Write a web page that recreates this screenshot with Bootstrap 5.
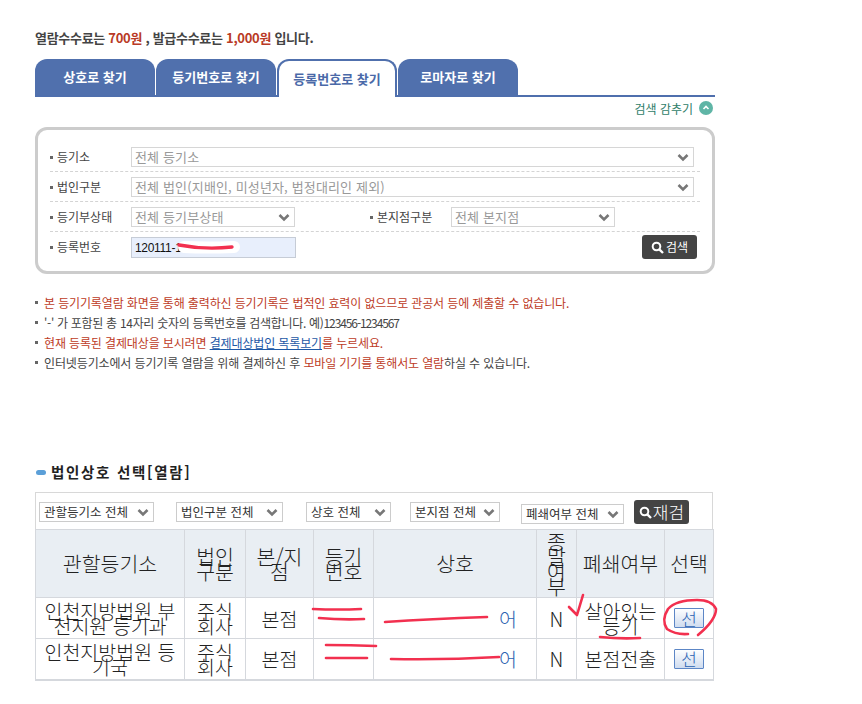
<!DOCTYPE html>
<html lang="ko">
<head>
<meta charset="utf-8">
<title>법인상호 선택</title>
<link rel="stylesheet" href="https://cdn.jsdelivr.net/npm/bootstrap@5.3.0/dist/css/bootstrap.min.css">
<style>
html,body{height:704px;overflow:hidden}
body{font-family:"Noto Sans CJK KR","Liberation Sans",sans-serif;color:#333;background:#fff;position:relative}
.pagewrap{width:680px;margin-left:35px;padding-top:30px}
.feeline{font-size:13px;font-weight:700;line-height:16px;height:29px;color:#444;letter-spacing:-.3px}
.feeline em{font-style:normal;color:#b93a26}
.tabbar{border-bottom:2px solid #4f6fad;height:38px;gap:1px}
.tabbtn{width:120px;height:36px;background:#5070ad;color:#fff;font-size:13px;font-weight:700;border-radius:12px 12px 0 0;display:flex;align-items:center;justify-content:center;text-decoration:none}
.tabbtn.on{background:#fff;color:#4a69a8;border:2px solid #5070ad;border-bottom:0;height:38px;margin-bottom:-2px}
.hidebar{height:30px;font-size:12px;color:#2f7d69;padding:3px 2px 0 0;gap:6px;line-height:18px}
.hidedot{width:14px;height:14px;border-radius:50%;background:#5fb5a6;display:block;margin-top:1px}
.searchbox{border:3px solid #ccc;border-radius:12px;padding:12px 12px 9px 12px;height:147px}
.srow{height:30px;border-bottom:1px dashed #d4d4d4;padding-top:5px}
.srow:last-child{border-bottom:0}
.slabel{width:81px;font-size:12px;color:#444;position:relative;padding-left:7px;flex:none;line-height:18px;margin-top:1px}
.slabel::before{content:"";position:absolute;left:0;top:8px;width:3px;height:3px;background:#666}
.sgap{margin-left:75px}
.pick,.fsel{background-image:url("data:image/svg+xml,%3csvg xmlns='http://www.w3.org/2000/svg' viewBox='0 0 12 9'%3e%3cpath fill='none' stroke='%23777' stroke-width='2.6' d='M1.5 2 6 6.5 10.5 2'/%3e%3c/svg%3e")}
.pick{height:20px;min-height:20px;padding:0 18px 0 3px;font-size:13px;line-height:18px;border:1px solid #d6d6d6;border-radius:0;color:#999;background-position:right 4px center;background-size:12px 9px;letter-spacing:.15px}
.pick.wide{width:563px}
.pick.half{width:164px}
.regno{width:165px;height:21px;min-height:21px;padding:0 3px;font-family:"Liberation Sans",sans-serif;font-size:12px;letter-spacing:-.3px;border:1px solid #c6ccd6;border-radius:0;background:#e8effc;color:#111}
.gobtn{width:55px;height:24px;padding:0;background:#444;color:#fff;font-size:12px;border:0;border-radius:3px;margin:-2px 3px 0 auto;gap:2px}
.notes{list-style:none;margin:19px 0 0;padding:0;font-size:12px;line-height:20px;color:#444;letter-spacing:-.13px;height:164px}
.notes li{padding-left:9px;position:relative}
.notes li::before{content:"";position:absolute;left:0;top:8px;width:3px;height:3px;background:#666}
.notes li.graynote{letter-spacing:-.3px}
.tightnum{letter-spacing:-1.1px}
.redtxt{color:#bd3b26}
.notes a{color:#1d58a6}
.titlebar{font-size:14.5px;font-weight:700;color:#222;line-height:18px;letter-spacing:1.7px;gap:5px;height:35px;padding-top:6px}
.pill{width:10px;height:5px;border-radius:3px;background:#5b9fd8;display:block;margin:7px 0 0 1px}
.filterbar{width:678px;height:37px;border:1px solid #d8d8d8;border-bottom:0}
.fsel{height:20px;min-height:20px;padding:0 16px 0 4px;font-size:12.5px;line-height:18px;border:1px solid #ccc;border-radius:0;color:#333;background-position:right 4px center;background-size:12px 9px;margin-top:9px;flex:none}
.f1{width:115px;margin-left:3px}
.f2{width:107px;margin-left:22px}
.f3{width:85px;margin-left:23px}
.f4{width:90px;margin-left:19px}
.f5{width:103px;margin-left:21px;margin-top:11px}
.fbtn{width:55px;height:24px;margin:7px 0 0 10px;padding:0;background:#444;color:#fff;font-size:17px;font-weight:300;border:0;border-radius:3px;gap:1px;line-height:20px}
.gridtbl{table-layout:fixed;width:678px;margin:0;border-collapse:collapse;--bs-table-bg:transparent}
.gridtbl th,.gridtbl td{border:1px solid #d5d8dd;padding:0;text-align:center;vertical-align:middle;font-size:19.5px;line-height:15px;font-weight:300;color:#222;overflow:visible}
.gridtbl th{background:#e9eef3;height:68px;font-size:20.5px}
.gridtbl td{height:41px}
.gridtbl tbody tr:last-child td{border-bottom:2px solid #d5d8dd}
.gridtbl th.nowrapcell{white-space:nowrap}
.nameend{text-align:right!important;padding-right:19px!important;color:#2b62b0!important}
.pickbtn{width:30px;height:20px;padding:0;font-size:17px;font-weight:300;line-height:17px;color:#2a62b3;border:1px solid #5c86c6;border-radius:1px;background:linear-gradient(#fdfeff,#cfdcef);display:block;margin:0 auto}
.inkover{position:absolute;left:0;top:0;width:862px;height:704px;pointer-events:none}
</style>
</head>
<body>
<div class="pagewrap">
  <div class="feeline">열람수수료는 <em>700원</em> , 발급수수료는 <em>1,000원</em> 입니다.</div>
  <div class="tabbar d-flex align-items-start">
    <a class="tabbtn" href="#">상호로 찾기</a>
    <a class="tabbtn" href="#">등기번호로 찾기</a>
    <a class="tabbtn on" href="#">등록번호로 찾기</a>
    <a class="tabbtn" href="#">로마자로 찾기</a>
  </div>
  <div class="hidebar d-flex justify-content-end">
    <span>검색 감추기</span>
    <span class="hidedot"><svg width="14" height="14" viewBox="0 0 14 14" class="d-block"><path d="M4.5 8 7 5.5 9.5 8" fill="none" stroke="#fff" stroke-width="1.6"/></svg></span>
  </div>
  <div class="searchbox">
    <div class="srow d-flex align-items-start">
      <span class="slabel">등기소</span>
      <select class="form-select pick wide"><option>전체 등기소</option></select>
    </div>
    <div class="srow d-flex align-items-start" >
      <span class="slabel">법인구분</span>
      <select class="form-select pick wide"><option>전체 법인(지배인, 미성년자, 법정대리인 제외)</option></select>
    </div>
    <div class="srow d-flex align-items-start">
      <span class="slabel">등기부상태</span>
      <select class="form-select pick half"><option>전체 등기부상태</option></select>
      <span class="slabel sgap">본지점구분</span>
      <select class="form-select pick half"><option>전체 본지점</option></select>
    </div>
    <div class="srow d-flex align-items-start">
      <span class="slabel">등록번호</span>
      <input class="form-control regno" value="120111-1">
      <button class="btn gobtn d-flex align-items-center justify-content-center" type="button">
        <svg width="13" height="13" viewBox="0 0 13 13"><circle cx="5.5" cy="5.5" r="3.8" fill="none" stroke="#fff" stroke-width="2"/><path d="M8.3 8.3 12 12" stroke="#fff" stroke-width="2.4"/></svg>검색
      </button>
    </div>
  </div>
  <ul class="notes">
    <li class="redtxt">본 등기기록열람 화면을 통해 출력하신 등기기록은 법적인 효력이 없으므로 관공서 등에 제출할 수 없습니다.</li>
    <li class="graynote">'-' 가 포함된 총 14자리 숫자의 등록번호를 검색합니다. 예)<span class="tightnum">123456-1234567</span></li>
    <li class="redtxt">현재 등록된 결제대상을 보시려면 <a href="#">결제대상법인 목록보기</a>를 누르세요.</li>
    <li>인터넷등기소에서 등기기록 열람을 위해 결제하신 후 <span class="redtxt">모바일 기기를 통해서도 열람</span>하실 수 있습니다.</li>
  </ul>
  <div class="titlebar d-flex align-items-start"><span class="pill"></span><span>법인상호 선택[열람]</span></div>
  <div class="filterbar d-flex align-items-start">
    <select class="form-select fsel f1"><option>관할등기소 전체</option></select>
    <select class="form-select fsel f2"><option>법인구분 전체</option></select>
    <select class="form-select fsel f3"><option>상호 전체</option></select>
    <select class="form-select fsel f4"><option>본지점 전체</option></select>
    <select class="form-select fsel f5"><option>폐쇄여부 전체</option></select>
    <button class="btn fbtn d-flex align-items-center justify-content-center" type="button">
      <svg width="13" height="13" viewBox="0 0 13 13"><circle cx="5.5" cy="5.5" r="3.8" fill="none" stroke="#fff" stroke-width="2"/><path d="M8.3 8.3 12 12" stroke="#fff" stroke-width="2.4"/></svg>재검
    </button>
  </div>
  <table class="table gridtbl">
    <colgroup>
      <col style="width:149px"><col style="width:61px"><col style="width:68px"><col style="width:60px"><col style="width:163px"><col style="width:40px"><col style="width:88px"><col style="width:49px">
    </colgroup>
    <thead>
      <tr>
        <th>관할등기소</th><th>법인<br>구분</th><th>본/지<br>점</th><th>등기<br>번호</th><th>상호</th><th>종<br>말<br>여<br>부</th><th class="nowrapcell">폐쇄여부</th><th class="nowrapcell">선택</th>
      </tr>
    </thead>
    <tbody>
      <tr>
        <td>인천지방법원 부<br>천지원 등기과</td><td>주식<br>회사</td><td>본점</td><td></td><td class="nameend">어</td><td>N</td><td>살아있는<br>등기</td><td><button class="btn pickbtn" type="button">선</button></td>
      </tr>
      <tr>
        <td>인천지방법원 등<br>기국</td><td>주식<br>회사</td><td>본점</td><td></td><td class="nameend">어</td><td>N</td><td>본점전출</td><td><button class="btn pickbtn" type="button">선</button></td>
      </tr>
    </tbody>
  </table>
</div>
<svg class="inkover" viewBox="0 0 862 704" fill="none" stroke-linecap="round" stroke-linejoin="round">
  <path d="M184 247Q205 248 234 247" stroke="#fff" stroke-width="12"/>
  <path d="M179 245Q205 250 232 247" stroke="#f2304f" stroke-width="3.4"/>
  <g stroke="#f2304f" stroke-width="2.6">
    <path d="M313 609Q338 610 361 609"/>
    <path d="M319 618Q342 620 364 619"/>
    <path d="M326 645Q350 645 376 646"/>
    <path d="M326 658Q345 658 367 658"/>
    <path d="M385 622Q430 619 487 617"/>
    <path d="M391 659Q445 660 499 657"/>
    <path d="M569 607 577 615 583 595"/>
    <path d="M600 637Q620 639 640 638"/>
    <path d="M698 635Q716 620 716 609Q712 600 697 600Q676 600 668 609Q661 620 667 629Q676 635 688 634"/>
  </g>
</svg>
<script src="https://cdn.jsdelivr.net/npm/bootstrap@5.3.0/dist/js/bootstrap.bundle.min.js"></script>
</body>
</html>
